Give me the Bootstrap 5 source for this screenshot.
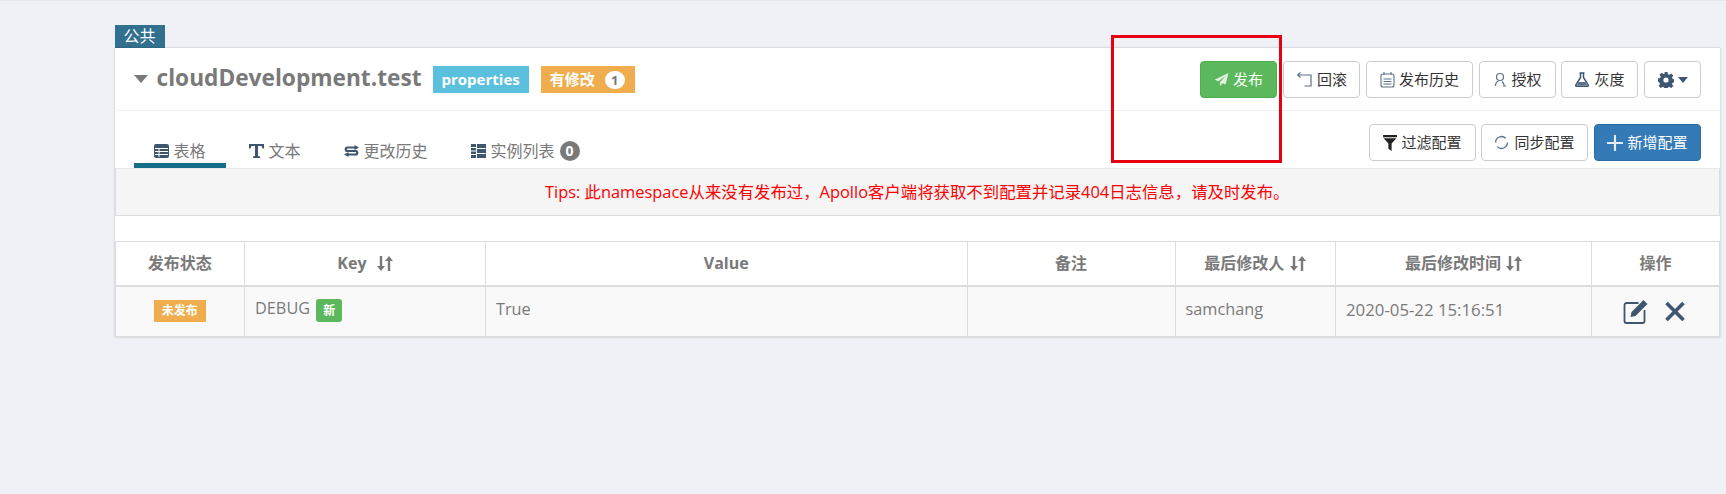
<!doctype html>
<html lang="zh"><head><meta charset="utf-8"><title>Apollo</title>
<link href="https://cdn.jsdelivr.net/npm/bootstrap@5.3.0/dist/css/bootstrap.min.css" rel="stylesheet">
<style>
html,body{height:100%}
body{background:#f0f1f6;font-family:"Open Sans","Noto Sans CJK SC",sans-serif;font-size:14px;color:#797979;margin:0}
.topline{height:1px;background:#e6e7ec}
.wrap{padding:24px 6px 0 114.5px}
.scope-tag{width:50px;height:23px;background:#31708f;color:#fff;font-size:16px;line-height:23px;text-align:center}
.ns-panel{background:#fff;box-shadow:0 0 2px rgba(0,0,0,.25)}
.ns-head{height:63px;border-bottom:1px solid #f0f1f6;padding:13px 19px 0 19px}
.caret-big{width:0;height:0;border-left:7.5px solid transparent;border-right:7.5px solid transparent;border-top:8px solid #797979;margin-right:9px;margin-top:-2px}
.ns-title{font-size:22.700px;font-weight:700;line-height:28px;color:#797979;margin:-4px 11px 0 0}
.lbl{height:27px;color:#fff;font-size:15px;font-weight:700;line-height:27px;padding:0 9px}
.lbl-info{background:#5bc0de;margin-right:12px}
.lbl-warn{background:#f0ad4e;padding-right:10px}
.lbl-warn i{display:inline-block;font-style:normal;background:#fff;color:#797979;border-radius:10px;width:20px;height:18px;line-height:18px;font-size:13px;text-align:center;margin-left:10px}
.act{height:37px;padding:0 9px;font-size:15px;color:#333;background:#fff;border:1px solid #ccc;border-radius:4px;display:inline-flex;align-items:center;justify-content:center;gap:4px;white-space:nowrap}
.act svg{flex:none}
.act-g{background:#5cb85c;border-color:#4cae4c;color:#fff}
.act-b{background:#337ab7;border-color:#2e6da4;color:#fff}
.pull-one{margin-left:-1px}
.push-one{margin-left:1px}
.ns-tabs{height:57px;padding:13px 19px 0 19px}
.tab-list{gap:3px}
.tab-it{height:44px;display:flex;align-items:center;gap:5px;color:#797979;font-size:16px;padding:14px 20px 0 20px;border-bottom:5px solid transparent}
.tab-it.on{border-bottom-color:#156e87}
.tab-badge{background:#797979;color:#fff;border-radius:10px;width:20px;height:20px;line-height:20px;font-size:14px;font-weight:700;text-align:center}
.tips{height:48px;background:#f5f5f5;border:1px solid #ddd;border-top-color:#e8e8e8;color:#f00;font-size:16.400px;line-height:46px;text-align:center;margin-bottom:25px}
.cfg{width:100%;table-layout:fixed;border-collapse:collapse;margin:0}
.cfg th,.cfg td{border:1px solid #ddd;color:#797979;padding:0 10px;vertical-align:middle}
.cfg th{height:44px;text-align:center;font-size:16px;font-weight:700;border-bottom-width:2px}
.cfg td{height:51px;background:#f9f9f9;font-size:16.300px;padding-bottom:4px}
.cfg td.stamp{font-size:16.800px}
.cfg td.st-cell{padding:0 0 4px}
.st-tag{display:inline-block;background:#f0ad4e;color:#fff;font-size:12px;font-weight:700;width:52px;height:22px;line-height:22px;text-align:center}
.new-tag{display:inline-block;background:#5cb85c;color:#fff;font-size:12px;font-weight:700;width:26px;height:23px;line-height:23px;text-align:center;border-radius:3px;margin-left:2px;vertical-align:-1px}
.sorter{margin-left:6px;vertical-align:-3px}
.redbox{position:absolute;left:1111px;top:35px;width:171px;height:128px;border:3px solid #e60012;pointer-events:none}
.ops{display:flex;justify-content:center;gap:15px;align-items:center;padding-top:4px;margin-left:-3px}
</style></head>
<body>
<div class="topline"></div>
<div class="wrap">
<div class="scope-tag">公共</div>
<div class="ns-panel">
  <div class="ns-head d-flex justify-content-between">
    <div class="d-flex align-items-center align-self-start" style="height:37px">
      <span class="caret-big"></span>
      <h4 class="ns-title">cloudDevelopment.test</h4>
      <span class="lbl lbl-info">properties</span>
      <span class="lbl lbl-warn">有修改<i>1</i></span>
    </div>
    <div class="d-flex align-self-start" style="gap:6px">
      <button class="btn act act-g" style="width:77px"><svg width="15" height="15" viewBox="0 0 14 14"><path fill="#e3f2e3" d="M13.500 1 .5 7.200l3.700 1.400L11 3.400 5.600 9.500V13l2.200-2.500 3 1.200z"/></svg>发布</button>
      <button class="btn act" style="width:77px"><svg width="17" height="15" viewBox="0 0 16 15" fill="none" stroke="#5c7089" stroke-width="1.200"><path d="M1 3h13.500v11H8M1 3l3-2.500M1 3l3 2.500"/></svg>回滚</button>
      <button class="btn act" style="width:107px"><svg width="15" height="17" viewBox="0 0 15 17" fill="none" stroke="#5c7089" stroke-width="1.100"><rect x="1" y="3" width="13" height="13" rx="2"/><path d="M4 1v3M11 1v3M3.500 8h8M3.500 10.500h8M3.500 13h8"/></svg>发布历史</button>
      <button class="btn act" style="width:77px"><svg width="14" height="15" viewBox="0 0 14 15" fill="none" stroke="#5c7089" stroke-width="1.200"><circle cx="7" cy="5" r="3.500"/><path d="M2.500 14c0-3 1.500-4.500 3-5M11.500 14c-.3-1.500-1-3-2.500-4.500M10 14h3"/></svg>授权</button>
      <button class="btn act pull-one" style="width:77px"><svg width="16" height="15" viewBox="0 0 16 15"><path fill="none" stroke="#3f5670" stroke-width="1.500" d="M5.500 1h5M6.500 1v4.500L1.800 13c-.3.700 0 1.200.7 1.200h11c.7 0 1-.5.7-1.200L9.500 5.500V1"/><path fill="#5c7089" d="M4.500 10h7l1.500 3.500H3z"/></svg>灰度</button>
      <button class="btn act" style="width:57px"><svg width="16" height="16" viewBox="0 0 16 16"><path fill="#3f5670" d="M6.500 0h3l.4 2.200 1.400.6 1.900-1.300 2.100 2.100-1.300 1.900.6 1.400 2.200.4v3l-2.200.4-.6 1.400 1.300 1.900-2.100 2.100-1.900-1.300-1.400.6-.4 2.200h-3l-.4-2.200-1.400-.6-1.900 1.300-2.100-2.100 1.300-1.900-.6-1.400L0 9.500v-3l2.200-.4.600-1.400-1.300-1.900 2.100-2.100 1.900 1.300 1.400-.6z"/><circle cx="8" cy="8" r="2.600" fill="#fff"/></svg><svg width="10" height="6" viewBox="0 0 10 6"><path fill="#3f5670" d="M0 0h10L5 6z"/></svg></button>
    </div>
  </div>
  <div class="ns-tabs d-flex justify-content-between">
    <div class="d-flex tab-list">
      <div class="tab-it on"><svg width="15" height="14" viewBox="0 0 15 14"><rect width="15" height="14" rx="2" fill="#3f5670"/><path stroke="#fff" d="M1 4.500h13M1 7.500h13M1 10.500h13M5 4v9" fill="none"/></svg>表格</div>
      <div class="tab-it"><svg width="15" height="14" viewBox="0 0 15 14"><path fill="#3f5670" d="M0 0h15v4.500h-1.500L12.500 2H9v10l2 .6V14H4v-1.400l2-.6V2H2.500L1.500 4.500H0z"/></svg>文本</div>
      <div class="tab-it"><svg width="15" height="12" viewBox="0 0 15 12"><path fill="none" stroke="#3f5670" stroke-width="2.200" d="M11 2.500H3.500a1.700 1.700 0 0 0 0 3.500h8a1.700 1.700 0 0 1 0 3.500H4"/><path fill="#3f5670" d="M10.500 0 15 2.500l-4.500 2.500zM4.500 7 0 9.500 4.500 12z"/></svg>更改历史</div>
      <div class="tab-it"><svg width="15" height="14" viewBox="0 0 15 14"><path fill="#3f5670" d="M0 0h15v14H0z"/><path stroke="#fff" d="M5.500 0v14M0 3.500h5M0 7h5M0 10.500h5M6 4.500h8.500M6 9.500h8.500" fill="none"/></svg>实例列表<span class="tab-badge">0</span></div>
    </div>
    <div class="d-flex" style="gap:5px">
      <button class="btn act" style="width:107px"><svg width="14" height="16" viewBox="0 0 13 15"><path fill="#222" d="M0 0h13v2H0zM.5 3h12L8 8v7l-3-2V8z"/></svg>过滤配置</button>
      <button class="btn act" style="width:107px;gap:5px"><svg width="15" height="15" viewBox="0 0 14 14" fill="none" stroke="#5c7089" stroke-width="1.200"><path d="M1.500 7a5.500 5.500 0 0 1 9.500-3.800M12.500 7a5.500 5.500 0 0 1-9.500 3.800"/></svg>同步配置</button>
      <button class="btn act act-b push-one" style="width:107px"><svg width="16" height="16" viewBox="0 0 15 15"><path fill="#e3ecf4" d="M6.500 0h2v6.500H15v2H8.500V15h-2V8.500H0v-2h6.500z"/></svg>新增配置</button>
    </div>
  </div>
  <div class="tips">Tips: 此namespace从来没有发布过，Apollo客户端将获取不到配置并记录404日志信息，请及时发布。</div>
  <table class="cfg">
    <colgroup><col style="width:129.500px"><col style="width:241px"><col style="width:481.500px"><col style="width:208px"><col style="width:160.500px"><col style="width:256px"><col></colgroup>
    <thead><tr>
      <th>发布状态</th>
      <th>Key <svg class="sorter" width="16" height="17" viewBox="0 0 16 15"><path fill="#797979" d="M2.800 0h2.400v10H8l-4 5-4-5h2.800zM10.800 15h2.400V5H16l-4-5-4 5h2.800z"/></svg></th>
      <th>Value</th><th>备注</th>
      <th>最后修改人<svg class="sorter" width="16" height="17" viewBox="0 0 16 15"><path fill="#797979" d="M2.800 0h2.400v10H8l-4 5-4-5h2.800zM10.800 15h2.400V5H16l-4-5-4 5h2.800z"/></svg></th>
      <th>最后修改时间<svg class="sorter" style="margin-left:5px" width="16" height="17" viewBox="0 0 16 15"><path fill="#797979" d="M2.800 0h2.400v10H8l-4 5-4-5h2.800zM10.800 15h2.400V5H16l-4-5-4 5h2.800z"/></svg></th>
      <th>操作</th></tr></thead>
    <tbody><tr>
      <td class="text-center st-cell"><span class="st-tag">未发布</span></td>
      <td>DEBUG <span class="new-tag">新</span></td>
      <td>True</td><td></td><td>samchang</td><td class="stamp">2020-05-22 15:16:51</td>
      <td><div class="ops"><svg width="26" height="25" viewBox="0 0 25 25"><path fill="none" stroke="#3f5670" stroke-width="1.800" d="M15 4H3a2 2 0 0 0-2 2v16a2 2 0 0 0 2 2h16a2 2 0 0 0 2-2V11"/><path fill="#3f5670" d="M20 1l4 4-12 12-5 1 1-5z"/></svg><svg width="22" height="21" viewBox="0 0 21 21"><path stroke="#3f5670" stroke-width="3.600" d="M2 2l17 17M19 2 2 19"/></svg></div></td>
    </tr></tbody>
  </table>
</div>
</div>
<div class="redbox"></div>
<script src="https://cdn.jsdelivr.net/npm/bootstrap@5.3.0/dist/js/bootstrap.bundle.min.js"></script>
</body></html>
